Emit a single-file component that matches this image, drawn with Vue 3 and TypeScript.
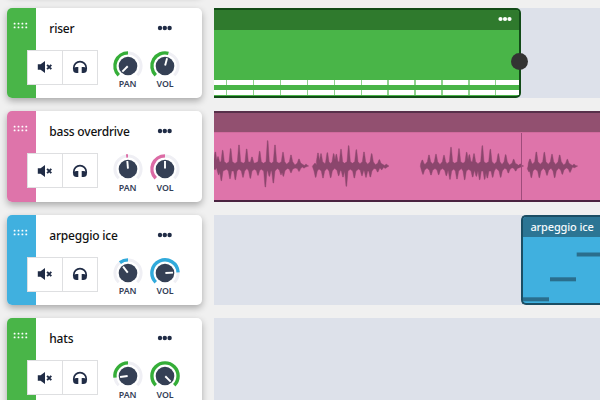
<script setup lang="ts">
interface Track {
  name: string
  color: string
  arc: string
  pan: number
  vol: number
  clip: 'pattern' | 'audio' | 'melody' | 'none'
}

const tracks: Track[] = [
  { name: 'riser', color: '#49b548', arc: '#35ae38', pan: -135, vol: 15, clip: 'pattern' },
  { name: 'bass overdrive', color: '#de74aa', arc: '#dc6ba5', pan: -5, vol: 0, clip: 'audio' },
  { name: 'arpeggio ice', color: '#40b0df', arc: '#31aadb', pan: -38, vol: 87, clip: 'melody' },
  { name: 'hats', color: '#49b548', arc: '#35ae38', pan: -97, vol: 135, clip: 'none' },
]

const point = (deg: number, r: number): string => {
  const a = (deg * Math.PI) / 180
  return `${(16 + r * Math.sin(a)).toFixed(2)} ${(16 - r * Math.cos(a)).toFixed(2)}`
}
const arc = (from: number, to: number): string =>
  `M${point(from, 13.1)}A13.1 13.1 0 ${to - from > 180 ? 1 : 0} 1 ${point(to, 13.1)}`

const knobs = (t: Track) => [
  { label: 'PAN', angle: t.pan, path: arc(Math.min(t.pan, -8), 0) },
  { label: 'VOL', angle: t.vol, path: arc(-135, t.vol) },
]

type Peak = [number, number]
interface Burst { start: number; end: number; up: Peak[]; down: Peak[] }

// Peaks are [x, distance from the centre line], in thirds of a pixel.
const bursts: Burst[] = [
  {
    start: 0, end: 284,
    up: [[4, 43], [12, 29], [26, 48], [38, 22], [50, 53], [63, 22], [75, 64], [88, 24], [98, 52], [114, 28], [122, 24], [137, 45], [148, 24], [161, 77], [172, 28], [183, 64], [195, 26], [207, 42], [218, 16], [231, 34], [243, 10], [255, 22], [276, 6]],
    down: [[3, 10], [14, 25], [22, 43], [38, 22], [48, 37], [64, 40], [75, 20], [87, 33], [99, 16], [109, 36], [121, 22], [132, 27], [142, 24], [154, 62], [166, 30], [178, 50], [190, 16], [201, 25], [208, 30], [220, 16], [231, 19], [243, 12], [255, 15], [270, 5]],
  },
  {
    start: 295, end: 525,
    up: [[303, 9], [312, 40], [321, 38], [333, 20], [340, 41], [350, 21], [359, 38], [367, 36], [381, 51], [391, 24], [404, 62], [415, 27], [427, 50], [438, 20], [450, 43], [461, 16], [473, 38], [484, 12], [496, 20], [517, 6]],
    down: [[305, 33], [315, 20], [327, 35], [339, 16], [350, 34], [362, 14], [374, 28], [387, 32], [397, 60], [409, 26], [421, 35], [434, 20], [444, 28], [456, 33], [469, 32], [480, 16], [491, 17], [503, 10], [514, 6]],
  },
  {
    start: 619, end: 929,
    up: [[625, 19], [633, 14], [645, 34], [656, 17], [666, 36], [678, 14], [690, 33], [699, 20], [711, 57], [722, 25], [735, 53], [747, 24], [758, 42], [766, 35], [780, 38], [792, 20], [805, 62], [816, 27], [829, 51], [841, 18], [853, 38], [864, 14], [875, 35], [886, 10], [899, 21], [919, 7]],
    down: [[627, 24], [639, 13], [651, 26], [663, 17], [674, 25], [686, 17], [697, 28], [708, 39], [719, 20], [729, 38], [742, 17], [752, 40], [764, 22], [776, 32], [787, 30], [797, 40], [812, 39], [820, 35], [836, 33], [846, 15], [860, 33], [872, 14], [883, 20], [894, 10], [905, 14]],
  },
  {
    start: 942, end: 1091,
    up: [[948, 22], [956, 18], [967, 43], [979, 16], [991, 42], [1003, 16], [1014, 36], [1025, 14], [1037, 34], [1049, 10], [1060, 21], [1080, 6]],
    down: [[945, 16], [952, 34], [963, 20], [976, 34], [988, 14], [999, 27], [1011, 14], [1022, 34], [1034, 14], [1045, 24], [1057, 12], [1068, 18], [1081, 4]],
  },
]

// Small secondary bumps are folded into the valleys so the main spikes stand out.
const edge = (peaks: Peak[], sign: number): string[] => {
  const out: string[] = []
  peaks.forEach(([x, h], i) => {
    const small = h < 29 && (peaks[i - 1]?.[1] ?? 0) > h && (peaks[i + 1]?.[1] ?? 0) > h
    if (small) {
      out.push(`${x} ${100 + sign * Math.min(9, h * 0.4)}`)
      return
    }
    const level = Math.min(14, h * 0.45)
    out.push(`${x - 5} ${100 + sign * level}`, `${x - 1} ${100 + sign * h}`, `${x + 1} ${100 + sign * h}`, `${x + 5} ${100 + sign * level}`)
  })
  return out
}
const wave = bursts
  .map((b) => `M${[`${b.start} 100`, ...edge(b.up, -1), `${b.end} 99`, ...edge(b.down, 1).reverse()].join('L')}Z`)
  .join('')
</script>

<template>
  <main class="editor">
    <div class="row">
      <section class="card"></section>
      <div class="lane"></div>
    </div>
    <div v-for="t in tracks" :key="t.name" class="row">
      <section class="card">
        <div class="grip" :style="{ background: t.color }">
          <svg width="15" height="7" viewBox="0 0 15 7" fill="#fff">
            <template v-for="c in 4" :key="c">
              <rect :x="c * 3.9 - 3.2" y=".7" width="1.8" height="1.8" rx=".5" />
              <rect :x="c * 3.9 - 3.2" y="4.4" width="1.8" height="1.8" rx=".5" />
            </template>
          </svg>
        </div>
        <div class="body">
          <header class="head">
            <span class="name">{{ t.name }}</span>
            <svg class="more" width="16" height="6" viewBox="0 0 16 6" fill="#202c46">
              <circle cx="3" cy="3" r="2.2" /><circle cx="7.8" cy="3" r="2.2" /><circle cx="12.6" cy="3" r="2.2" />
            </svg>
          </header>
          <div class="controls">
            <div class="buttons">
              <button type="button">
                <svg width="16" height="14" viewBox="0 0 16 14">
                  <path d="M.8 4.2h2.8L8 1v12L3.6 9.8H.8z" fill="#202c46" />
                  <path d="M10.1 4.8l4.200 4.400M14.300 4.800l-4.200 4.400" stroke="#202c46" stroke-width="1.900" />
                </svg>
              </button>
              <button type="button">
                <svg width="16" height="14" viewBox="0 0 16 14">
                  <path d="M1.800 9.500V7.800a6.200 6.200 0 0 1 12.400 0v1.700" fill="none" stroke="#202c46" stroke-width="1.700" />
                  <path d="M6.300 7v6H4.600C2.500 13 1.100 11.700 1.100 10S2.500 7 4.600 7zM9.700 7v6h1.700c2.100 0 3.500-1.300 3.500-3s-1.400-3-3.500-3z" fill="#202c46" />
                </svg>
              </button>
            </div>
            <div class="knobs">
              <div v-for="k in knobs(t)" :key="k.label" class="knob">
                <svg width="32" height="32" viewBox="0 0 32 32">
                  <path :d="arc(-135, 135)" fill="none" stroke="#efeff4" stroke-width="3" />
                  <path :d="k.path" fill="none" :stroke="t.arc" stroke-width="3.400" />
                  <circle cx="16" cy="16" r="9.300" fill="#354055" />
                  <path d="M16 15.600V8" stroke="#fff" stroke-width="1.900" :transform="`rotate(${k.angle} 16 16)`" />
                </svg>
                <span>{{ k.label }}</span>
              </div>
            </div>
          </div>
        </div>
      </section>

      <div class="lane">
        <div v-if="t.clip === 'pattern'" class="clip pattern">
          <div class="bar">
            <svg width="14" height="6" viewBox="0 0 14 6" fill="#fff">
              <circle cx="2.500" cy="3" r="2.100" /><circle cx="7" cy="3" r="2.100" /><circle cx="11.500" cy="3" r="2.100" />
            </svg>
          </div>
          <div class="steps">
            <div class="strip"></div>
            <div class="strip"></div>
          </div>
          <i class="handle"></i>
        </div>
        <div v-else-if="t.clip === 'audio'" class="clip audio">
          <div class="bar"></div>
          <svg class="wave" width="386" height="67" viewBox="0 0 1158 201">
            <path :d="wave" fill="#8b466d" stroke="#8b466d" stroke-opacity=".5" stroke-width="2.500" stroke-linejoin="round" />
            <path d="M922.500 0V201" stroke="#9e4c7b" stroke-width="3" />
          </svg>
        </div>
        <div v-else-if="t.clip === 'melody'" class="clip melody">
          <div class="bar">{{ t.name }}</div>
          <svg class="notes" width="78" height="66" viewBox="0 0 78 66" fill="#2a6e8d">
            <rect x="0" y="60.300" width="26" height="4" />
            <rect x="27" y="40.300" width="26" height="4" />
            <rect x="53.700" y="15.500" width="26" height="4" />
          </svg>
        </div>
      </div>
    </div>
  </main>
</template>

<style>
body { margin: 0; overflow: hidden; background: #f0f0f0; }
</style>

<style scoped>
.editor {
  box-sizing: border-box;
  width: 600px;
  height: 400px;
  overflow: hidden;
  display: flex;
  flex-direction: column;
  gap: 13.3px;
  background: #f0f0f0;
  font-family: "Noto Sans", "Open Sans", sans-serif;
}
.row {
  flex: none;
  display: grid;
  grid-template-columns: 194.4px 1fr;
  column-gap: 12.4px;
  height: 90.2px;
  padding-left: 7.4px;
}
.row:first-child { margin-top: -95.9px; }
.card {
  display: flex;
  background: #fff;
  border-radius: 5px;
  box-shadow: 0 3px 7px rgba(0, 0, 0, 0.3);
}
.grip {
  flex: none;
  width: 28.6px;
  box-sizing: border-box;
  padding: 14px 0 0 5.6px;
  border-radius: 5px 0 0 5px;
}
.grip svg { display: block; }
.body { flex: 1; display: flex; flex-direction: column; }
.head {
  height: 42.4px;
  box-sizing: border-box;
  display: flex;
  align-items: center;
  justify-content: space-between;
  padding: 0 29px 2px 13.3px;
}
.name {
  padding-top: 2.2px;
  font-size: 12px;
  font-weight: 500;
  line-height: 18px;
  letter-spacing: -0.2px;
  color: #111;
  white-space: nowrap;
}
.controls { display: flex; align-items: flex-start; }
.buttons {
  display: flex;
  box-sizing: border-box;
  width: 71px;
  height: 35px;
  margin-left: -9px;
  border: 1px solid #dedfe1;
  background: #fff;
}
button {
  flex: 1;
  display: flex;
  align-items: center;
  justify-content: center;
  padding: 0;
  border: 0;
  background: none;
}
button + button { border-left: 1px solid #dedfe1; }
.knobs { display: flex; gap: 5.4px; margin-left: 13.7px; }
.knob { display: flex; flex-direction: column; align-items: center; width: 32px; }
.knob svg { display: block; }
.knob span {
  margin-top: -3.7px;
  font-size: 8.8px;
  line-height: 12px;
  font-weight: 600;
  color: #344057;
}
.lane { position: relative; display: flex; background: #dde1ea; min-width: 0; }
.clip { box-sizing: border-box; display: flex; flex-direction: column; height: 100%; }
.bar { flex: none; box-sizing: border-box; }
.pattern {
  position: relative;
  width: 307px;
  border: 2px solid #124b18;
  border-left: 0;
  border-radius: 0 5px 5px 0;
  background: #49b548;
}
.pattern .bar {
  display: flex;
  justify-content: flex-end;
  height: 20.5px;
  padding: 6.5px 7px 0 0;
  border-radius: 0 3px 0 0;
  background: #2f7a2d;
}
.steps { display: flex; flex-direction: column; gap: 5px; margin-top: 49.9px; }
.strip {
  height: 5px;
  background: repeating-linear-gradient(90deg, #8fd18d 0 1.4px, #fff 1.4px 26.9px) -14.9px 0 / 340px 5px repeat-x;
}
.handle {
  position: absolute;
  top: 43px;
  right: -8.5px;
  width: 17px;
  height: 17px;
  border-radius: 50%;
  background: #333;
}
.audio {
  width: 100%;
  border-top: 2px solid #57304a;
  border-bottom: 2px solid #4b2340;
  background: #de74aa;
}
.audio .bar { height: 20px; background: #925070; border-bottom: 1px solid #d16b9e; }
.wave { display: block; }
.melody {
  flex: 1;
  min-width: 0;
  overflow: hidden;
  margin-left: 306.8px;
  border: 2px solid #1b4e64;
  border-right: 0;
  border-radius: 5px 0 0 5px;
  background: #40b0df;
}
.melody .bar {
  height: 20.5px;
  padding-left: 7.5px;
  background: #2c7594;
  color: #f4fafc;
  font-size: 11px;
  font-weight: 500;
  line-height: 20px;
  letter-spacing: -0.15px;
  white-space: nowrap;
}
.notes { display: block; }
</style>
